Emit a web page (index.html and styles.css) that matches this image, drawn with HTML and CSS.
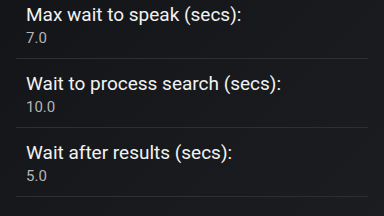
FILE: index.html
```html
<!DOCTYPE html>
<html lang="en">
<head>
	<meta charset="utf-8">
	<title>Voice settings</title>
	<link rel="stylesheet" href="styles.css">
</head>
<body>
	<div id="pref-screen">
		<ul class="pref-list">
			<li class="pref-item">
				<div class="pref-title">Max wait to speak (secs):</div>
				<div class="pref-summary">7.0</div>
			</li>
			<li class="pref-item">
				<div class="pref-title">Wait to process search (secs):</div>
				<div class="pref-summary">10.0</div>
			</li>
			<li class="pref-item">
				<div class="pref-title">Wait after results (secs):</div>
				<div class="pref-summary">5.0</div>
			</li>
		</ul>
	</div>
</body>
</html>
```

FILE: styles.css
```css
html, body {
	margin:0;
	padding:0;
	height:100%;
	overflow:hidden;
}

body {
	background: linear-gradient(135deg, #131518 0%, #17191c 50%, #1b1d21 100%);
	font-family: Roboto, "Liberation Sans", sans-serif;
}

#pref-screen {
	height:100%;
	overflow:hidden;
}

/* list is scrolled a little, first row is cut at the top */
.pref-list {
	list-style:none;
	margin:-10px 16px 0 16px;
	padding:0;
}

.pref-item {
	padding:14px 0 10px 10px;
	border-bottom:1px solid #2d2f33;
}

.pref-title {
	font-size:19px;
	line-height:22px;
	color:#f2f2f2;
}

.pref-summary {
	margin-top:2px;
	font-size:15px;
	line-height:20px;
	color:#b4b5b7;
}
```
